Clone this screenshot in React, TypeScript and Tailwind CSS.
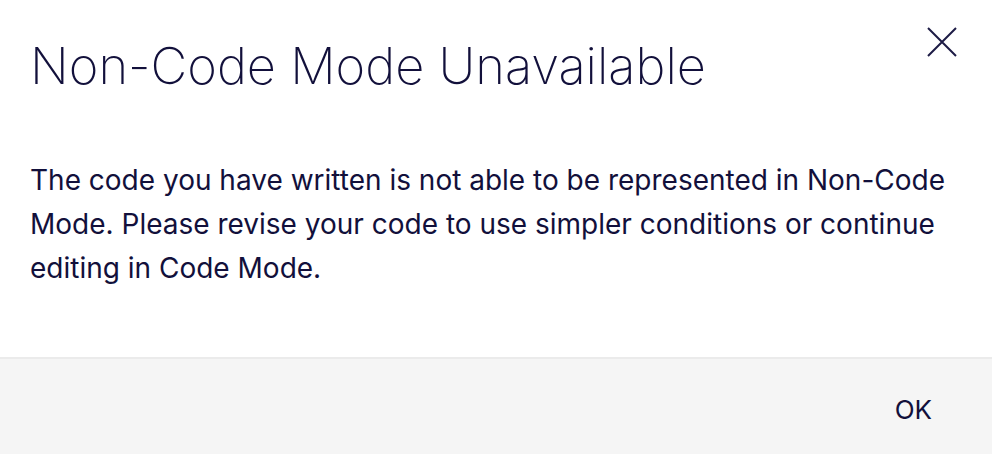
import React from 'react';

const CloseIcon = () => (
  <svg width="32" height="32" viewBox="0 0 32 32" fill="none" stroke="currentColor" strokeWidth="2">
    <path d="M2 2 L30 30 M30 2 L2 30" />
  </svg>
);

export default function App() {
  return (
    <div
      className="w-[992px] h-[454px] bg-white flex flex-col text-[#12103b]"
      style={{ fontFamily: 'Inter, "Noto Sans", sans-serif' }}
    >
      <div className="flex-1 flex flex-col">
        <div className="flex items-start justify-between pl-[30px] pr-[34px] pt-[26px]">
          <h1 className="text-[50.6px] font-extralight leading-[60px] mt-[10px]">
            Non-Code Mode Unavailable
          </h1>
          <button className="text-[#1d1b45]">
            <CloseIcon />
          </button>
        </div>
        <p className="pl-[30px] pr-[16px] mt-[62px] text-[28px] leading-[44px]">
          The code you have written is not able to be represented in Non-Code Mode. Please revise your
          code to use simpler conditions or continue editing in Code Mode.
        </p>
      </div>
      <div className="h-[97px] bg-[#f5f5f5] border-t-2 border-[#ebebeb] flex items-center justify-end pr-[60px]">
        <button className="text-[26px] leading-none mt-[6px] text-[#12103b]">OK</button>
      </div>
    </div>
  );
}
